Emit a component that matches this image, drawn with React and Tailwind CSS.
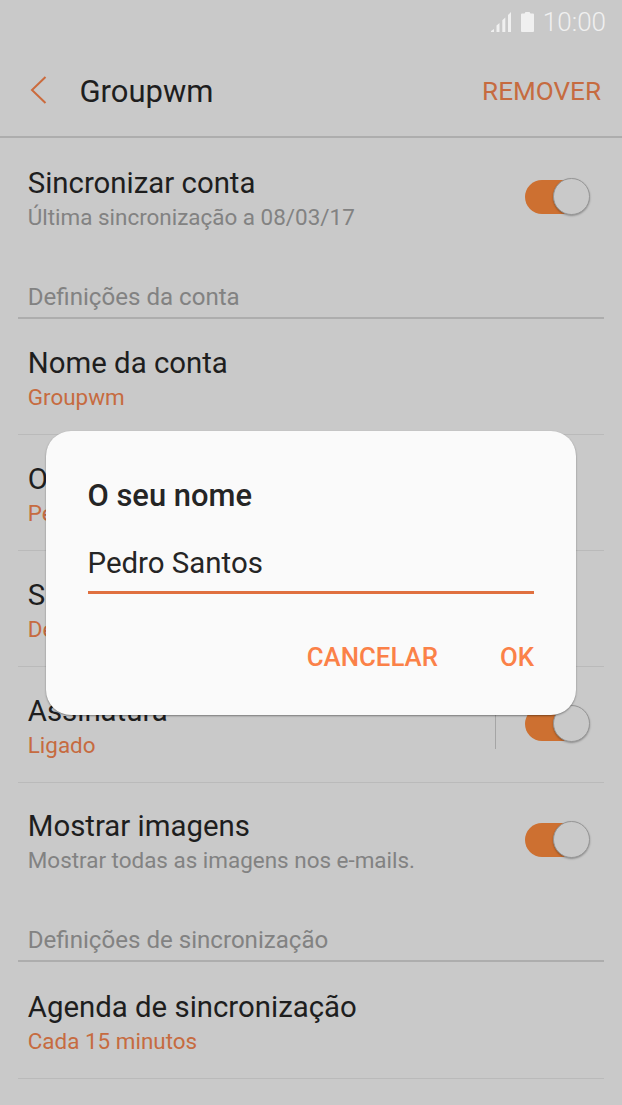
import React from "react";

function Toggle() {
  return (
    <div className="relative h-[38px] w-[65px] shrink-0">
      <div className="absolute top-[2px] left-0 h-[34px] w-[54px] rounded-full bg-[#cd7031]" />
      <div className="absolute top-0 right-[0.500px] size-[37px] rounded-full border border-[#969696] bg-[#c9c9c9] shadow-[0_1px_2px_rgba(0,0,0,0.3)]" />
    </div>
  );
}

function Row({ title, sub, accent, toggle, split, last, pad = "pt-[26px]", togglePad = "" }) {
  return (
    <div
      className={
        "mx-[18px] flex h-[116px] justify-between pr-[14px] pl-[9.750px] " +
        (last ? "" : "border-b border-[#bababa]")
      }
    >
      <div className={"flex flex-col whitespace-nowrap " + pad}>
        <span className="text-[29.380px] leading-[36px] text-[#1e1e1e]">{title}</span>
        <span
          className={
            "mt-[2px] text-[22.450px] leading-[28px] " + (accent ? "text-[#c66b40]" : "text-[#828282]")
          }
        >
          {sub}
        </span>
      </div>
      {toggle && (
        <div className={"flex h-full items-center gap-[29px] " + togglePad}>
          {split && <div className="h-[50px] w-px bg-[#a5a5a5]" />}
          <Toggle />
        </div>
      )}
    </div>
  );
}

function Section({ children }) {
  return (
    <div className="mx-[18px] flex h-[64px] items-end border-b-2 border-[#adadad] pb-[6px] pl-[9.750px]">
      <span className="text-[24.100px] leading-[28px] whitespace-nowrap text-[#828282]">{children}</span>
    </div>
  );
}

export default function App() {
  return (
    <div className="relative h-[1105px] w-[622px] overflow-hidden bg-[#c9c9c9] font-['Roboto',sans-serif]">
      <div className="flex h-[44px] items-center justify-end pr-[16px]">
        <svg className="h-[20px] w-[21px]" viewBox="0 0 21 20" fill="#f0f0f0">
          <path d="M0 20v-1l3-2v3zM5.500 20v-6.500l3-2.500v9zM11.300 20V8.300l3-2.800V20zM17 20V3l3-3v20z" />
        </svg>
        <svg className="ml-[9px] h-[20px] w-[13px]" viewBox="0 0 13 20" fill="#f0f0f0">
          <path d="M1 1.500h2.500L4.500 0h4l1 1.500H12a1 1 0 0 1 1 1V19a1 1 0 0 1-1 1H1a1 1 0 0 1-1-1V2.500a1 1 0 0 1 1-1z" />
        </svg>
        <span className="ml-[9px] text-[26px] leading-[30px] font-light text-[#f0f0f0]">10:00</span>
      </div>
      <header className="flex h-[94px] items-center border-b-2 border-[#adadad] pr-[21px] pl-[30px]">
        <svg className="h-[28px] w-[17px]" viewBox="0 0 17 28" fill="none" stroke="#cb6b3d" strokeWidth="2">
          <path d="M15.500 1 2 14l13.500 13" />
        </svg>
        <h1 className="ml-[32.500px] flex-1 pt-[3px] text-[31px] leading-[36px] text-[#1e1e1e]">Groupwm</h1>
        <button className="pt-[2px] text-[26.100px] leading-[32px] text-[#c66b40]">REMOVER</button>
      </header>
      <Row
        title="Sincronizar conta"
        sub="Última sincronização a 08/03/17"
        toggle
        last
        pad="pt-[27px]"
        togglePad="pt-[1px]"
      />
      <div className="h-px" />
      <Section>Definições da conta</Section>
      <Row title="Nome da conta" sub="Groupwm" accent />
      <Row title="O seu nome" sub="Pedro Santos" accent />
      <Row title="Sempre Cc/Bcc" sub="Desligado" accent />
      <Row title="Assinatura" sub="Ligado" accent toggle split togglePad="pb-[1px]" />
      <Row
        title="Mostrar imagens"
        sub="Mostrar todas as imagens nos e-mails."
        toggle
        last
        pad="pt-[25px]"
        togglePad="pb-[2px]"
      />
      <div className="-mt-px">
        <Section>Definições de sincronização</Section>
      </div>
      <div className="h-px" />
      <Row title="Agenda de sincronização" sub="Cada 15 minutos" accent />

      <div className="absolute top-[431px] left-[46px] flex h-[284px] w-[529.500px] flex-col rounded-[25px] bg-[#fafafa] px-[41.500px] pt-[47px] shadow-[0_1px_2px_rgba(0,0,0,0.4)]">
        <h2 className="text-[30.900px] leading-[36px] font-medium text-[#252525]">O seu nome</h2>
        <div className="mt-[31px] flex h-[49px] border-b-[3px] border-[#e0703f] text-[29.450px] leading-[36px] text-[#252525]">
          Pedro Santos
        </div>
        <div className="mt-[47px] flex justify-end gap-[62px] text-[25.800px] leading-[32px] font-medium text-[#fb8148]">
          <button>CANCELAR</button>
          <button>OK</button>
        </div>
      </div>
    </div>
  );
}
